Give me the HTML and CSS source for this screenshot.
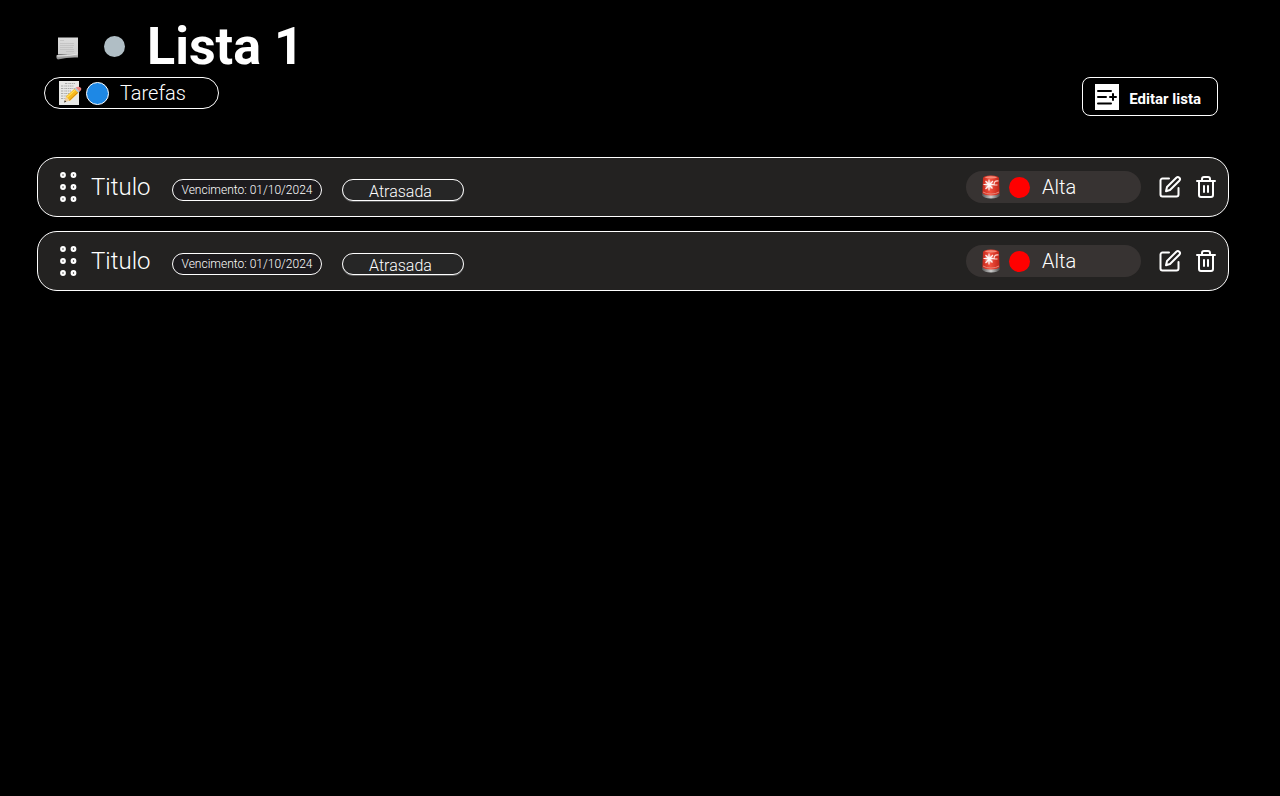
FILE: index.html
```html
<!DOCTYPE html>
<html lang="pt-BR">
<head>
<meta charset="utf-8">
<title>Lista 1</title>
<link rel="stylesheet" href="styles.css">
</head>
<body>
<svg class="defs" aria-hidden="true">
  <defs>
    <linearGradient id="paper" x1="0" y1="0" x2="0" y2="1"><stop offset="0" stop-color="#dcdcdc"/><stop offset="1" stop-color="#cfcfcf"/></linearGradient>
    <linearGradient id="curl" x1="0" y1="0" x2="0" y2="1"><stop offset="0" stop-color="#dedede"/><stop offset="1" stop-color="#848484"/></linearGradient>
    <linearGradient id="lamp" x1="0" y1="0" x2="1" y2="0"><stop offset="0" stop-color="#c5281c"/><stop offset=".45" stop-color="#f4503d"/><stop offset="1" stop-color="#bd2419"/></linearGradient>
    <linearGradient id="base" x1="0" y1="0" x2="1" y2="0"><stop offset="0" stop-color="#555"/><stop offset=".5" stop-color="#ccc"/><stop offset="1" stop-color="#484848"/></linearGradient>
    <radialGradient id="glow"><stop offset="0" stop-color="#fff"/><stop offset="1" stop-color="#fff" stop-opacity="0"/></radialGradient>
    <symbol id="siren" viewBox="0 0 20 24">
      <path d="M1.200 18v2.500Q3 23.500 10 23.500T18.800 20.500V18z" fill="url(#base)"/>
      <path d="M2 3Q2.500 .500 10 .500T18 3L18.600 18Q17 20.500 10 20.500T1.400 18z" fill="url(#lamp)"/>
      <path d="M3.500 2.500Q6 1.200 10 1.200T16.500 2.500Q14 3.500 10 3.500T3.500 2.500z" fill="#f58a78"/>
      <path d="M2 17Q5 19 10 19T18 17" fill="none" stroke="#e98475"/>
      <circle cx="8" cy="10" r="5" fill="url(#glow)"/>
      <path d="M8 4.500v11M2.500 9.500h11M4.500 6l7 7.500M12 6l-7.500 8" stroke="#fff" stroke-width="1.200" stroke-opacity=".9"/>
      <path d="M17.500 6Q13 5 13 10h3.500" fill="none" stroke="#ffd5cd" stroke-width="1.200"/>
    </symbol>
    <symbol id="grip" viewBox="0 0 18 32">
      <g fill="none" stroke="#fff" stroke-width="2.200"><circle cx="4" cy="4" r="1.800"/><circle cx="14.500" cy="4" r="1.800"/><circle cx="4" cy="16" r="1.800"/><circle cx="14.500" cy="16" r="1.800"/><circle cx="4" cy="28" r="1.800"/><circle cx="14.500" cy="28" r="1.800"/></g>
    </symbol>
    <symbol id="edit" viewBox="0 0 24 24">
      <g fill="none" stroke="#fff" stroke-width="2" stroke-linecap="round" stroke-linejoin="round"><path d="M11 3.500H4.500a2 2 0 0 0-2 2V19.500a2 2 0 0 0 2 2h14a2 2 0 0 0 2-2v-6.500"/><path d="M18.300 2.700a2.100 2.100 0 0 1 3 3L12 15l-4 1.200L9 12z"/></g>
    </symbol>
    <symbol id="trash" viewBox="0 0 24 24">
      <g fill="none" stroke="#fff" stroke-width="2" stroke-linecap="round" stroke-linejoin="round"><path d="M3 6h18M19 6v14a2 2 0 0 1-2 2H7a2 2 0 0 1-2-2V6M8 6V4a2 2 0 0 1 2-2h4a2 2 0 0 1 2 2v2M10 11v6M14 11v6"/></g>
    </symbol>
  </defs>
</svg>
<main class="page">
  <header class="header">
    <div class="heading">
      <svg class="page-icon" viewBox="0 0 24 24" aria-hidden="true">
        <path d="M2 2.500H22v17H2z" fill="url(#paper)"/>
        <path d="M4 5.500h4M4 8.500h14M4 10.500h14M4 12.500h13M4 14.500h14M10 16.500h8" stroke="#b9b9b9" stroke-width=".6"/>
        <path d="M1 20Q9 20 22 17V22.500Q12 22 2 24.500Q0 24 .500 20.500z" fill="url(#curl)"/>
        <path d="M1.500 21Q13 21 21.500 19" fill="none" stroke="#eee" stroke-width=".8"/>
      </svg>
      <span class="dot dot-gray"></span>
      <h1 class="title">Lista 1</h1>
    </div>
    <div class="toolbar">
      <div class="tag tag-tasks">
        <svg class="memo" viewBox="0 0 24 26" aria-hidden="true">
          <path d="M1 1h20v24H1z" fill="#e9e9e7"/>
          <path d="M7 3.500h10M3 6h13M3 8.500h14M3 11h10M3 13.500h9M3 16h6M3 18.500h5" stroke="#999" stroke-width=".8" stroke-dasharray="2 .7 1 .6"/>
          <path d="M6 22.500l2-6 4 4z" fill="#efcf9e"/><path d="M6 22.500l.8-2.300 1.500 1.500z" fill="#333"/>
          <path d="M8 16.500l8.500-7.800 4 4L12 20.800z" fill="#f7b91c"/>
          <path d="M9 17.400l8.500-7.800" stroke="#ffe05c" stroke-width="1.200"/>
          <path d="M11.300 20.300l8.600-8.100" stroke="#d38912"/>
          <path d="M16.300 8.800l1.500-1.300 4 4-1.400 1.400z" fill="#b9c6cb"/>
          <path d="M17.700 7.600Q20.500 5.800 22.500 7.500T21.700 11.600z" fill="#ef8583"/>
        </svg>
        <span class="dot dot-blue"></span>
        <span>Tarefas</span>
      </div>
      <button class="edit-list" type="button">
        <svg class="list-icon" viewBox="0 0 24 26" aria-hidden="true"><path d="M0 0h24v26H0z" fill="#fff"/><path d="M3 7h13M3 13h8M3 19.500h13M15 13h6M18 10v6" fill="none" stroke="#000" stroke-width="2" stroke-linecap="round"/></svg>
        <span>Editar lista</span>
      </button>
    </div>
  </header>
  <ul class="tasks">
    <li class="task">
      <svg class="grip" aria-hidden="true"><use href="#grip"/></svg>
      <h2 class="task-title">Titulo</h2>
      <span class="pill pill-due">Vencimento: 01/10/2024</span>
      <span class="pill pill-status">Atrasada</span>
      <div class="tag tag-priority"><svg class="siren" aria-hidden="true"><use href="#siren"/></svg><span class="dot dot-red"></span><span>Alta</span></div>
      <div class="actions">
        <button class="icon-button" type="button" aria-label="Editar"><svg class="icon" aria-hidden="true"><use href="#edit"/></svg></button>
        <button class="icon-button" type="button" aria-label="Excluir"><svg class="icon" aria-hidden="true"><use href="#trash"/></svg></button>
      </div>
    </li>
    <li class="task">
      <svg class="grip" aria-hidden="true"><use href="#grip"/></svg>
      <h2 class="task-title">Titulo</h2>
      <span class="pill pill-due">Vencimento: 01/10/2024</span>
      <span class="pill pill-status">Atrasada</span>
      <div class="tag tag-priority"><svg class="siren" aria-hidden="true"><use href="#siren"/></svg><span class="dot dot-red"></span><span>Alta</span></div>
      <div class="actions">
        <button class="icon-button" type="button" aria-label="Editar"><svg class="icon" aria-hidden="true"><use href="#edit"/></svg></button>
        <button class="icon-button" type="button" aria-label="Excluir"><svg class="icon" aria-hidden="true"><use href="#trash"/></svg></button>
      </div>
    </li>
  </ul>
</main>
</body>
</html>
```

FILE: styles.css
```css
* { box-sizing: border-box; }

body {
  margin: 0;
  background: #000;
  color: #fff;
  font-family: Roboto, "Liberation Sans", sans-serif;
  font-weight: 300;
}

svg { display: block; flex: none; }
.defs { position: absolute; width: 0; height: 0; }

.page { padding: 16px 51px 16px 37px; }

.header { padding: 0 11px 0 7px; }

.heading {
  display: flex;
  align-items: center;
  padding-left: 12px;
}
.page-icon { width: 24px; height: 24px; overflow: visible; }
.title {
  margin: 0 0 0 22px;
  font-size: 52px;
  line-height: 61px;
  font-weight: 700;
}

.dot {
  flex: none;
  width: 21px;
  height: 21px;
  border-radius: 50%;
}
.dot-gray { margin-left: 24px; background: #b0bec5; }
.dot-blue { width: 23px; height: 23px; margin-right: 11px; border: 1px solid #fff; background: #1e88e5; }
.dot-red { margin-right: 12px; background: #f00; }

.toolbar {
  display: flex;
  justify-content: space-between;
  align-items: flex-start;
}

.tag {
  display: flex;
  align-items: center;
  width: 175px;
  height: 32px;
  border-radius: 16px;
  font-size: 20px;
  line-height: 24px;
}
.tag-tasks { padding-left: 13px; border: 1px solid #fff; }
.memo { width: 24px; height: 26px; margin-right: 4px; }

.edit-list {
  display: flex;
  align-items: center;
  gap: 10px;
  height: 39px;
  padding: 0 16px 0 12px;
  border: 1px solid #fff;
  border-radius: 8px;
  background: #000;
  color: #fff;
  font: 700 15px/18px Roboto, "Liberation Sans", sans-serif;
}
.edit-list span { padding-top: 4px; }
.list-icon { width: 24px; height: 26px; }

.tasks {
  display: flex;
  flex-direction: column;
  gap: 14px;
  margin: 41px 0 0;
  padding: 0;
  list-style: none;
}
.task {
  display: flex;
  align-items: center;
  height: 60px;
  padding: 0 10px 0 21px;
  border: 1px solid #fff;
  border-radius: 20px;
  background: #232221;
}
.grip { width: 18px; height: 32px; }
.task-title {
  width: 81px;
  margin: 0 0 0 14px;
  font-size: 24px;
  line-height: 28px;
  font-weight: 300;
}

.pill {
  height: 22px;
  margin-top: 6px;
  border: 1px solid #fff;
  border-radius: 11px;
  text-align: center;
  white-space: nowrap;
}
.pill-due {
  width: 150px;
  background: #1c1a1d;
  font-size: 12px;
  line-height: 20px;
}
.pill-status {
  width: 122px;
  margin-left: 20px;
  padding-right: 5px;
  background: #262626;
  box-shadow: 0 1px 0 -0px #5a5a5a;
  font-size: 16px;
  line-height: 23px;
}

.tag-priority {
  margin-left: auto;
  padding-left: 15px;
  background: #373332;
}
.siren { width: 20px; height: 24px; margin-right: 8px; }

.actions { display: flex; gap: 12px; margin-left: 17px; }
.icon-button {
  padding: 0;
  border: 0;
  background: none;
}
.icon { width: 24px; height: 24px; }
```
